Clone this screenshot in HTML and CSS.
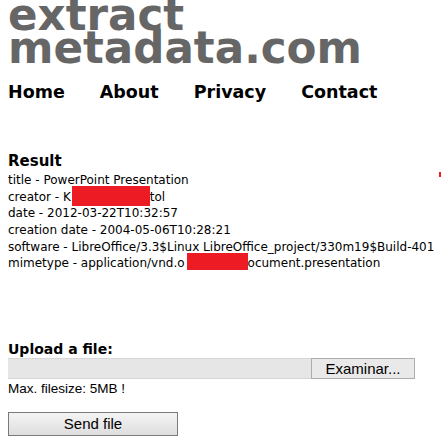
FILE: index.html
```html
<!DOCTYPE html>
<html>
<head>
<meta charset="utf-8">
<title>extract metadata.com</title>
<link rel="stylesheet" href="styles.css">
</head>
<body>
<div class="page">
  <h1 class="logo">extract<br>metadata.com</h1>
  <nav class="nav">
    <a class="nav-link" href="#">Home</a>
    <a class="nav-link" href="#">About</a>
    <a class="nav-link" href="#">Privacy</a>
    <a class="nav-link" href="#">Contact</a>
  </nav>
  <h2 class="result-title">Result</h2>
  <div class="result">
    <div class="row">title - PowerPoint Presentation</div>
    <div class="row">creator - K<span class="redact redact-creator"></span>tol</div>
    <div class="row">date - 2012-03-22T10:32:57</div>
    <div class="row">creation date - 2004-05-06T10:28:21</div>
    <div class="row">software - LibreOffice/3.3$Linux LibreOffice_project/330m19$Build-401</div>
    <div class="row">mimetype - application/vnd.o<span class="redact redact-mime"></span>ocument.presentation</div>
  </div>
  <form class="upload">
    <div class="upload-label">Upload a file:</div>
    <div class="file-row">
      <div class="file-field"></div>
      <div class="file-btn">Examinar...</div>
    </div>
    <div class="max">Max. filesize: 5MB !</div>
    <div class="send-btn">Send file</div>
  </form>
  <span class="red-mark"></span>
</div>
</body>
</html>
```
FILE: styles.css
```css
html, body {
  margin: 0;
  padding: 0;
  background: #fff;
}
.page {
  position: relative;
  padding: 0 8px;
  font-family: "DejaVu Sans", Verdana, sans-serif;
  color: #000;
}
.logo {
  margin: -1px 0 0 0;
  font-size: 43.6px;
  line-height: 33px;
  font-weight: bold;
  color: #666;
}
.nav {
  display: flex;
  gap: 35px;
  margin-top: 17px;
  font-size: 17.5px;
  line-height: 20px;
  font-weight: bold;
}
.nav-link {
  color: #000;
  text-decoration: none;
}
.result-title {
  margin: 50px 0 0 0;
  font-size: 15px;
  line-height: 18px;
  font-weight: bold;
}
.result {
  margin-top: 2px;
  font-size: 12px;
  line-height: 16.67px;
}
.row {
  white-space: nowrap;
}
.redact {
  display: inline-block;
  background: #ed1c24;
  vertical-align: baseline;
}
.redact-creator {
  width: 78px;
  height: 20px;
  margin: -3px 0 -5px 1px;
}
.redact-mime {
  width: 61px;
  height: 17px;
  margin: -2px 0 -3px 2px;
}
.upload {
  margin-top: 69px;
}
.upload-label {
  font-size: 14px;
  line-height: 17px;
  font-weight: bold;
}
.file-row {
  display: flex;
  width: 407px;
  height: 21px;
}
.file-field {
  width: 303px;
  box-sizing: border-box;
  background: #e6e6e6;
  border-top: 1px solid #d6d6d6;
  border-bottom: 1px solid #d6d6d6;
}
.file-btn {
  flex: 1;
  box-sizing: border-box;
  border: 1px solid #adadad;
  background: #e9e9e9;
  font-family: "Liberation Sans", Arial, sans-serif;
  font-size: 15px;
  line-height: 19px;
  text-align: center;
  color: #000;
}
.max {
  margin-top: 2px;
  font-family: "Liberation Sans", Arial, sans-serif;
  font-size: 13.5px;
  line-height: 16px;
  color: #000;
}
.send-btn {
  margin-top: 15px;
  width: 170px;
  height: 24px;
  box-sizing: border-box;
  border: 1px solid #7a7a7a;
  background: linear-gradient(#f4f4f4, #dedede);
  font-family: "Liberation Sans", Arial, sans-serif;
  font-size: 15px;
  line-height: 22px;
  text-align: center;
  color: #000;
}
.red-mark {
  position: absolute;
  left: 439px;
  top: 173px;
  width: 2px;
  height: 5px;
  background: #ed1c24;
}
```
